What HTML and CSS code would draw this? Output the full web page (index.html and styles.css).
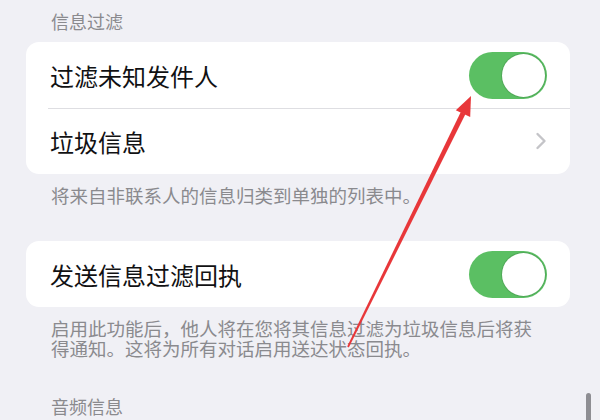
FILE: index.html
```html
<!DOCTYPE html>
<html lang="zh-CN">
<head>
    <meta charset="UTF-8">
    <meta name="viewport" content="width=device-width, initial-scale=1.0">
    <title>信息</title>
    <link rel="stylesheet" href="styles.css">
</head>
<body>

    <div class="page">
        <!-- 信息过滤 -->
        <div class="section-title">信息过滤</div>
        <div class="card">
            <div class="row">
                <span class="label">过滤未知发件人</span>
                <span class="toggle on"><span class="knob"></span></span>
            </div>
            <div class="row">
                <span class="label">垃圾信息</span>
                <svg class="chevron" width="12" height="18" viewBox="0 0 12 18">
                    <path d="M2.5 2 L9.5 9 L2.5 16" fill="none" stroke="#c4c4c8" stroke-width="2.4" stroke-linecap="round" stroke-linejoin="round"/>
                </svg>
            </div>
        </div>
        <div class="footer">将来自非联系人的信息归类到单独的列表中。</div>

        <div class="card card-gap">
            <div class="row">
                <span class="label">发送信息过滤回执</span>
                <span class="toggle on"><span class="knob"></span></span>
            </div>
        </div>
        <div class="footer">启用此功能后，他人将在您将其信息过滤为垃圾信息后将获得通知。这将为所有对话启用送达状态回执。</div>

        <!-- 音频信息 -->
        <div class="section-title section-gap">音频信息</div>
    </div>

    <!-- annotation arrow drawn over the screenshot -->
    <svg class="arrow" width="600" height="420" viewBox="0 0 600 420">
        <polygon points="465.4,114.3 460.8,111.9 347.2,346.5 348.8,347.5" fill="#e8373a"/>
        <polygon points="471,96 470.2,117.0 455.8,110.2" fill="#e8373a"/>
    </svg>

    <div class="scrollbar"></div>
</body>
</html>
```

FILE: styles.css
```css
body {
    font-family: "Noto Sans CJK SC", "Noto Sans", sans-serif;
    background-color: #f0f0f5;
    margin: 0;
    padding: 0;
    width: 600px;
    height: 420px;
    overflow: hidden;
    position: relative;
}

.page {
    padding: 11px 30px 0 26px;
}

/* Section headers and footers */
.section-title {
    font-size: 18px;
    line-height: 20px;
    color: #8a8a8e;
    padding-left: 25px;
    margin-bottom: 11px;
}

.section-gap {
    margin-top: 38px;
}

.footer {
    font-size: 18.5px;
    line-height: 20px;
    color: #8a8a8e;
    padding: 0 25px;
    margin-top: 11px;
}

/* Grouped cards */
.card {
    background: #fff;
    border-radius: 13px;
    overflow: hidden;
}

.card-gap {
    margin-top: 36px;
}

.row {
    height: 66px;
    display: flex;
    align-items: center;
    justify-content: space-between;
    padding: 0 23px 0 24px;
    position: relative;
}

    .row + .row::before {
        content: "";
        position: absolute;
        top: 0;
        left: 22px;
        right: 0;
        height: 1px;
        background: #dedee2;
    }

.label {
    font-size: 24px;
    color: #111113;
}

.chevron {
    display: block;
}

/* Switch */
.toggle {
    width: 78px;
    height: 47px;
    border-radius: 24px;
    background: #e4e4e8;
    display: flex;
    align-items: center;
    padding: 0 2px;
    box-sizing: border-box;
}

    .toggle.on {
        background: #5bbf63;
        justify-content: flex-end;
    }

.knob {
    width: 43px;
    height: 43px;
    border-radius: 50%;
    background: #fff;
    box-shadow: 0 0 0 1px rgba(60, 130, 70, 0.35);
}

/* Overlays */
.arrow {
    position: absolute;
    left: 0;
    top: 0;
    pointer-events: none;
}

.scrollbar {
    position: absolute;
    left: 586px;
    top: 393px;
    width: 5px;
    height: 40px;
    border-radius: 3px;
    background: #8e8e93;
}
```
